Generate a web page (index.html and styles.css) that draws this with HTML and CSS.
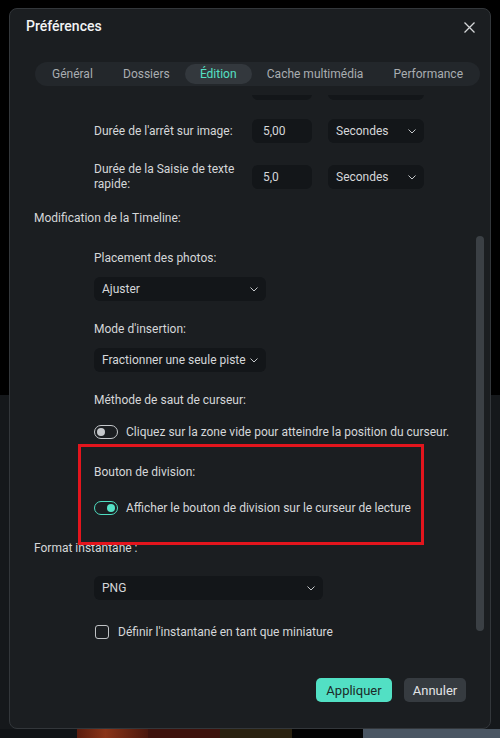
FILE: index.html
```html
<!DOCTYPE html>
<html lang="fr">
<head>
    <meta charset="UTF-8">
    <meta name="viewport" content="width=device-width, initial-scale=1.0">
    <title>Préférences</title>
    <link rel="stylesheet" href="styles.css">
</head>
<body>
    <div class="dialog">
        <div class="dialog-header">
            <h1 class="dialog-title">Préférences</h1>
            <button class="close-button" aria-label="Fermer">
                <svg width="11" height="11" viewBox="0 0 11 11"><path d="M0.5 0.5 L10.5 10.5 M10.5 0.5 L0.5 10.5" stroke="#d4d6d8" stroke-width="1.3" fill="none"/></svg>
            </button>
        </div>
        <nav class="tabs">
            <span class="tab">Général</span>
            <span class="tab">Dossiers</span>
            <span class="tab active">Édition</span>
            <span class="tab">Cache multimédia</span>
            <span class="tab">Performance</span>
        </nav>
        <div class="scroll-area">
            <div class="scroll-content">
                <!-- previous row, scrolled out of view -->
                <div class="field-row">
                    <div class="field-label"></div>
                    <div class="text-input"></div>
                    <div class="select select-unit"></div>
                </div>
                <div class="field-row">
                    <div class="field-label">Durée de l'arrêt sur image:</div>
                    <div class="text-input">5,00</div>
                    <div class="select select-unit">Secondes
                        <svg class="chevron" width="8" height="5" viewBox="0 0 8 5"><polyline points="0.5,0.5 4,4 7.5,0.5" stroke="#c4c7ca" stroke-width="1" fill="none"/></svg>
                    </div>
                </div>
                <div class="field-row">
                    <div class="field-label">Durée de la Saisie de texte rapide:</div>
                    <div class="text-input">5,0</div>
                    <div class="select select-unit">Secondes
                        <svg class="chevron" width="8" height="5" viewBox="0 0 8 5"><polyline points="0.5,0.5 4,4 7.5,0.5" stroke="#c4c7ca" stroke-width="1" fill="none"/></svg>
                    </div>
                </div>

                <div class="section-title">Modification de la Timeline:</div>

                <div class="group group-first">
                    <div class="group-label">Placement des photos:</div>
                    <div class="select select-short">Ajuster
                        <svg class="chevron" width="8" height="5" viewBox="0 0 8 5"><polyline points="0.5,0.5 4,4 7.5,0.5" stroke="#c4c7ca" stroke-width="1" fill="none"/></svg>
                    </div>
                </div>
                <div class="group">
                    <div class="group-label">Mode d'insertion:</div>
                    <div class="select select-short">Fractionner une seule piste
                        <svg class="chevron" width="8" height="5" viewBox="0 0 8 5"><polyline points="0.5,0.5 4,4 7.5,0.5" stroke="#c4c7ca" stroke-width="1" fill="none"/></svg>
                    </div>
                </div>
                <div class="group">
                    <div class="group-label toggle-label">Méthode de saut de curseur:</div>
                    <div class="option-row">
                        <span class="toggle"></span>
                        <span>Cliquez sur la zone vide pour atteindre la position du curseur.</span>
                    </div>
                </div>
                <div class="group group-highlight">
                    <div class="group-label split-label">Bouton de division:</div>
                    <div class="option-row">
                        <span class="toggle on"></span>
                        <span>Afficher le bouton de division sur le curseur de lecture</span>
                    </div>
                </div>

                <div class="section-title section-spaced">Format instantané :</div>

                <div class="group">
                    <div class="select select-wide">PNG
                        <svg class="chevron" width="8" height="5" viewBox="0 0 8 5"><polyline points="0.5,0.5 4,4 7.5,0.5" stroke="#c4c7ca" stroke-width="1" fill="none"/></svg>
                    </div>
                </div>
                <div class="group group-first">
                    <div class="option-row check-row">
                        <span class="checkbox"></span>
                        <span>Définir l'instantané en tant que miniature</span>
                    </div>
                </div>
            </div>
            <div class="scrollbar"></div>
        </div>
        <div class="dialog-footer">
            <button class="button button-primary">Appliquer</button>
            <button class="button button-cancel">Annuler</button>
        </div>
    </div>
    <div class="timeline-strip">
        <span class="clip clip-dark"></span>
        <span class="clip clip-fire"></span>
        <span class="clip clip-red"></span>
        <span class="clip clip-olive"></span>
        <span class="clip clip-black"></span>
        <span class="clip clip-road"></span>
    </div>
</body>
</html>
```

FILE: styles.css
```css
body {
    margin: 0;
    padding: 0;
    font-family: Roboto, "Noto Sans", sans-serif;
    font-size: 12px;
    color: #d5d7d9;
    background: linear-gradient(#000 0, #000 395px, #15181b 395px);
    overflow: hidden;
}
.dialog {
    box-sizing: border-box;
    width: 482px;
    height: 721px;
    margin: 8px 0 0 9px;
    background: #1b1e21;
    border: 1px solid #33373b;
    border-radius: 8px;
    display: flex;
    flex-direction: column;
}
.dialog-header {
    height: 33px;
    display: flex;
    align-items: center;
    justify-content: space-between;
    padding: 0 15px 0 16px;
}
.dialog-title {
    margin: 0;
    font-size: 14px;
    font-weight: 500;
    color: #f2f3f4;
}
.close-button {
    background: none;
    border: none;
    padding: 0;
    width: 11px;
    height: 11px;
    display: flex;
    margin-top: 3px;
}
.tabs {
    margin: 20px 10px 0 25px;
    height: 24px;
    box-sizing: border-box;
    padding: 2px;
    background: #23272b;
    border-radius: 12px;
    display: flex;
    justify-content: space-between;
}
.tab {
    padding: 0 15px;
    font-size: 12px;
    line-height: 20px;
    white-space: nowrap;
    color: #a9adb1;
    border-radius: 10px;
}
.tab.active {
    background: #33383d;
    color: #55e0c5;
}
.scroll-area {
    position: relative;
    flex: 1;
    margin-top: 9px;
    overflow: hidden;
}
.scroll-content {
    margin-top: -19px;
}
.scrollbar {
    position: absolute;
    right: 6px;
    top: 141px;
    width: 8px;
    height: 395px;
    background: #3b4045;
    border-radius: 4px;
}
.field-row {
    display: flex;
    align-items: center;
    min-height: 24px;
    margin: 0 0 19px 84px;
}
.field-label {
    width: 152px;
    margin-right: 6px;
    line-height: 15px;
}
.text-input {
    box-sizing: border-box;
    width: 60px;
    height: 24px;
    line-height: 24px;
    padding-left: 11px;
    background: #131619;
    border-radius: 6px;
    margin-right: 16px;
}
.select {
    box-sizing: border-box;
    height: 24px;
    padding: 0 8px;
    background: #131619;
    border-radius: 6px;
    display: flex;
    align-items: center;
    justify-content: space-between;
    white-space: nowrap;
}
.select-unit {
    width: 96px;
}
.select-short {
    width: 172px;
}
.select-wide {
    width: 229px;
}
.chevron {
    flex-shrink: 0;
}
.section-title {
    padding-left: 24px;
    line-height: 16px;
    margin-top: -1px;
}
.section-spaced {
    margin-top: 24px;
}
.group {
    margin: 20px 0 0 84px;
}
.group-first {
    margin-top: 24px;
}
.group-label {
    line-height: 16px;
    margin-bottom: 11px;
}
.toggle-label {
    margin-bottom: 16px;
}
.split-label {
    margin-bottom: 20px;
}
.group-highlight {
    position: relative;
    margin-top: 24px;
}
/* red annotation frame drawn over the setting */
.group-highlight::after {
    content: "";
    position: absolute;
    top: -20px;
    left: -16px;
    width: 346px;
    height: 101px;
    box-sizing: border-box;
    border: 3px solid #e3151d;
}
.option-row {
    display: flex;
    align-items: center;
    gap: 8px;
    line-height: 16px;
    white-space: nowrap;
}
.toggle {
    position: relative;
    box-sizing: border-box;
    width: 24px;
    height: 14px;
    border: 1.5px solid #c5c8cb;
    border-radius: 7px;
}
.toggle::after {
    content: "";
    position: absolute;
    top: 1.5px;
    left: 2px;
    width: 8px;
    height: 8px;
    border-radius: 50%;
    background: #c5c8cb;
}
.toggle.on {
    border-color: #4fdcc0;
}
.toggle.on::after {
    left: auto;
    right: 2px;
    background: #55e3c7;
}
.check-row {
    gap: 9px;
    padding-left: 1px;
}
.checkbox {
    box-sizing: border-box;
    width: 14px;
    height: 14px;
    border: 1.5px solid #bfc2c5;
    border-radius: 3px;
}
.dialog-footer {
    display: flex;
    justify-content: flex-end;
    gap: 12px;
    padding: 13px 24px 26px;
}
.button {
    height: 24px;
    padding: 0;
    border: none;
    border-radius: 5px;
    font-family: inherit;
    font-size: 13px;
    background: #363b40;
    color: #e2e4e6;
}
.button-primary {
    width: 76px;
    background: #52e0c4;
    color: #1c2a28;
}
.button-cancel {
    width: 62px;
}
.timeline-strip {
    display: flex;
    height: 9px;
}
.clip {
    height: 100%;
}
.clip-dark { width: 77px; background: #101316; }
.clip-fire { width: 71px; background: linear-gradient(90deg, #5a1c0e, #8a3418 40%, #4a160c); }
.clip-red { width: 72px; background: #3e120c; }
.clip-olive { width: 72px; background: #2a2210; }
.clip-black { width: 71px; background: #030303; }
.clip-road { flex: 1; background: #4a5663; }
```
